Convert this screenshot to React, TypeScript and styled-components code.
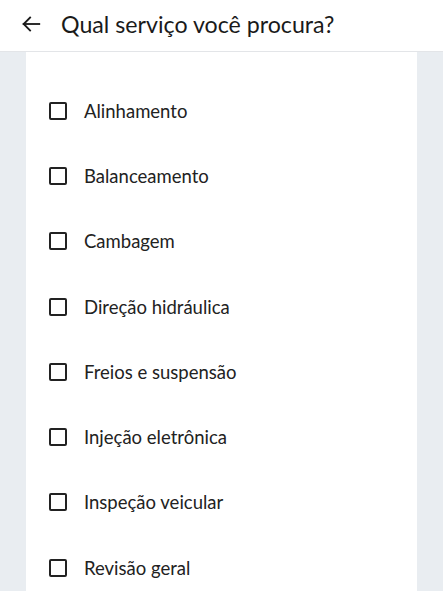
import React from "react";
import styled, { createGlobalStyle } from "styled-components";

const Global = createGlobalStyle`
  html, body { margin: 0; padding: 0; background: #e9edf1; }
  body { font-family: Lato, "Open Sans", sans-serif; color: #1f1f1f; }
`;

const Page = styled.div`
  width: 443px;
  height: 591px;
  overflow: hidden;
  display: flex;
  flex-direction: column;
  background: #e9edf1;
`;

const Header = styled.header`
  height: 52px;
  flex: 0 0 52px;
  background: #fff;
  border-bottom: 1px solid #e3e5e8;
  display: flex;
  align-items: center;
  padding: 0 0 4px 20px;
  box-sizing: border-box;
  gap: 19px;
`;

const Title = styled.h1`
  margin: 0;
  font-size: 23.2px;
  font-weight: 400;
  color: #1a1a1a;
`;

const Panel = styled.main`
  flex: 1;
  margin: 0 26px;
  background: #fff;
  padding-top: 26px;
  display: flex;
  flex-direction: column;
`;

const Row = styled.label`
  height: 65.3px;
  display: flex;
  align-items: center;
  padding-left: 23px;
  gap: 17px;
  font-size: 18.5px;
  color: #222;
`;

const Box = styled.span`
  width: 18px;
  height: 18px;
  box-sizing: border-box;
  border: 2px solid #222;
  border-radius: 2px;
  flex: 0 0 auto;
`;

const items = [
  "Alinhamento",
  "Balanceamento",
  "Cambagem",
  "Direção hidráulica",
  "Freios e suspensão",
  "Injeção eletrônica",
  "Inspeção veicular",
  "Revisão geral",
];

export default function App() {
  return (
    <Page>
      <Global />
      <Header>
        <svg width="22" height="22" viewBox="0 0 24 24" fill="none" stroke="#1a1a1a" strokeWidth="2" strokeLinecap="square">
          <path d="M21 12H4" />
          <path d="M11 5l-7 7 7 7" />
        </svg>
        <Title>Qual serviço você procura?</Title>
      </Header>
      <Panel>
        {items.map((t) => (
          <Row key={t}>
            <Box />
            {t}
          </Row>
        ))}
      </Panel>
    </Page>
  );
}
